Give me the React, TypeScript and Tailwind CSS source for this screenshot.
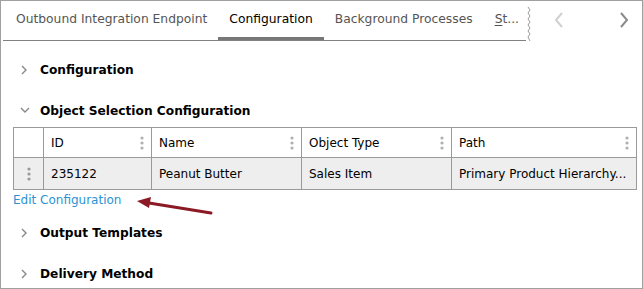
import React from 'react';

const FONT = "font-['DejaVu_Sans',sans-serif]";

function Chevron({ dir, className }: { dir: 'right' | 'down' | 'left'; className?: string }) {
  const d =
    dir === 'right' ? 'M2 1 L6 5 L2 9' : dir === 'down' ? 'M1 2 L5 6 L9 2' : 'M6 1 L2 5 L6 9';
  return (
    <svg width="10" height="10" viewBox="0 0 10 10" className={className} fill="none">
      <path d={d} stroke="currentColor" strokeWidth="1.4" />
    </svg>
  );
}

function Dots({ className }: { className?: string }) {
  return (
    <svg width="4" height="14" viewBox="0 0 4 14" className={className}>
      <circle cx="2" cy="2" r="1.6" fill="currentColor" />
      <circle cx="2" cy="7" r="1.6" fill="currentColor" />
      <circle cx="2" cy="12" r="1.6" fill="currentColor" />
    </svg>
  );
}

function SectionHeader({ label, open, className }: { label: string; open?: boolean; className?: string }) {
  return (
    <div className={`flex h-[20px] items-center ${className ?? ''}`}>
      <div className="flex w-[39px] justify-end pr-[10px] text-[#888]">
        <Chevron dir={open ? 'down' : 'right'} />
      </div>
      <span className="text-[12.2px] font-bold text-black">{label}</span>
    </div>
  );
}

function HeaderCell({ label, width }: { label: string; width: string }) {
  return (
    <th className={`${width} border border-[#9a9a9a] px-[7px] text-left font-normal`}>
      <div className="flex items-center justify-between">
        <span>{label}</span>
        <Dots className="text-[#b0b0b0]" />
      </div>
    </th>
  );
}

export default function App() {
  const tabs = ['Outbound Integration Endpoint', 'Configuration', 'Background Processes'];
  return (
    <div className={`relative h-[289px] w-[643px] overflow-hidden border border-[#a0a0a0] bg-white ${FONT}`}>
      {/* tab strip */}
      <div className="flex h-[40px]">
        <div className="ml-[2px] flex w-[523px] shrink-0 overflow-hidden whitespace-nowrap border-b border-[#808080] pl-[2px]">
          {tabs.map((t, i) => (
            <div
              key={t}
              className={`flex shrink-0 items-center px-[11px] pt-[1px] text-[12.3px] ${
                i === 1 ? 'border-b-[3px] border-[#777] text-black' : 'pb-[3px] text-[#555]'
              }`}
            >
              {t}
            </div>
          ))}
          <div className="flex shrink-0 items-center px-[11px] pb-[3px] pt-[1px] text-[12.3px] text-[#555]">
            <span className="underline decoration-[#555] underline-offset-2">S</span>t...
          </div>
        </div>
        <svg width="6" height="34" viewBox="0 0 6 34" className="mt-[6px] shrink-0" fill="none">
          <path
            d="M2 0 L4 3 L2 6 L4 9 L2 12 L4 15 L2 18 L4 21 L2 24 L4 27 L2 30 L4 34"
            stroke="#9a9a9a"
            strokeWidth="1"
          />
        </svg>
        <div className="flex flex-1 items-center justify-between pb-[2px] pl-[21px] pr-[12px]">
          <svg width="12" height="16" viewBox="0 0 12 16" fill="none">
            <path d="M9 1 L3 8 L9 15" stroke="#d0d0d0" strokeWidth="2" />
          </svg>
          <svg width="12" height="16" viewBox="0 0 12 16" fill="none">
            <path d="M3 1 L9 8 L3 15" stroke="#8a8a8a" strokeWidth="2" />
          </svg>
        </div>
      </div>

      <SectionHeader label="Configuration" className="mt-[19px]" />
      <SectionHeader label="Object Selection Configuration" open className="mt-[21px]" />

      <table className="ml-[12px] mt-[6px] w-[624px] border-collapse text-[12px] text-black">
        <thead>
          <tr className="h-[30px]">
            <th className="w-[30px] border border-[#9a9a9a]" />
            <HeaderCell label="ID" width="w-[108px]" />
            <HeaderCell label="Name" width="w-[150px]" />
            <HeaderCell label="Object Type" width="w-[150px]" />
            <HeaderCell label="Path" width="w-[185px]" />
          </tr>
        </thead>
        <tbody>
          <tr className="h-[32px] bg-[#eeeeee]">
            <td className="border border-[#9a9a9a]">
              <div className="flex justify-center">
                <Dots className="text-[#999]" />
              </div>
            </td>
            <td className="border border-[#9a9a9a] px-[7px]">235122</td>
            <td className="border border-[#9a9a9a] px-[7px]">Peanut Butter</td>
            <td className="border border-[#9a9a9a] px-[7px]">Sales Item</td>
            <td className="whitespace-nowrap border border-[#9a9a9a] px-[7px]">Primary Product Hierarchy...</td>
          </tr>
        </tbody>
      </table>

      <div className="ml-[12px] mt-[1px] flex h-[18px] items-center text-[12px] text-[#2b93d3]">Edit Configuration</div>

      <SectionHeader label="Output Templates" className="mt-[14px]" />
      <SectionHeader label="Delivery Method" className="mt-[21px]" />

      {/* callout arrow */}
      <svg
        className="absolute left-[130px] top-[192px]"
        width="90"
        height="26"
        viewBox="130 192 90 26"
        fill="none"
      >
        <path d="M210 212 L148 202" stroke="#8b1a24" strokeWidth="3" strokeLinecap="round" />
        <path d="M136 200 L150 196 L148 207 Z" fill="#8b1a24" />
      </svg>
    </div>
  );
}
